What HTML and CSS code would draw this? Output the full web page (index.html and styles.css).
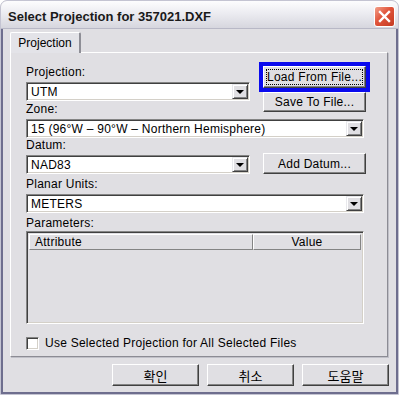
FILE: index.html
```html
<!DOCTYPE html>
<html lang="ko">
<head>
    <meta charset="UTF-8">
    <title>Select Projection</title>
    <link rel="stylesheet" href="styles.css">
</head>
<body>
<div class="window">
    <div class="titlebar">
        <span class="title">Select Projection for 357021.DXF</span>
        <span class="close">
            <svg width="13" height="13" viewBox="0 0 13 13"><path d="M2 2 L11 11 M11 2 L2 11" stroke="#fff" stroke-width="2.4" stroke-linecap="square"/></svg>
        </span>
    </div>
    <div class="frame">
        <div class="tabs"><span class="tab">Projection</span></div>
        <div class="panel">
            <div class="form">
                <label class="lbl lbl-proj">Projection:</label>
                <div class="combo combo-proj"><span class="val">UTM</span><span class="drop"><i></i></span></div>
                <div class="side">
                    <button class="btn focus"><span>Load From File...</span></button>
                    <button class="btn save">Save To File...</button>
                </div>
                <label class="lbl lbl-zone">Zone:</label>
                <div class="combo wide combo-zone"><span class="val">15 (96°W – 90°W – Northern Hemisphere)</span><span class="drop"><i></i></span></div>
                <label class="lbl lbl-datum">Datum:</label>
                <div class="combo combo-datum"><span class="val">NAD83</span><span class="drop"><i></i></span></div>
                <button class="btn add">Add Datum...</button>
                <label class="lbl lbl-planar">Planar Units:</label>
                <div class="combo wide combo-planar"><span class="val">METERS</span><span class="drop"><i></i></span></div>
                <label class="lbl lbl-params">Parameters:</label>
                <div class="list">
                    <div class="head">
                        <span class="col-attr">Attribute</span>
                        <span class="col-val">Value</span>
                    </div>
                </div>
                <div class="check">
                    <span class="box"></span>
                    <span>Use Selected Projection for All Selected Files</span>
                </div>
            </div>
        </div>
        <div class="footer">
            <button class="btn foot">확인</button>
            <button class="btn foot">취소</button>
            <button class="btn foot">도움말</button>
        </div>
    </div>
</div>
</body>
</html>
```

FILE: styles.css
```css
html, body { margin: 0; padding: 0; background: #fff; }
body { font-family: "Liberation Sans", Arial, "Noto Sans CJK KR", sans-serif; font-size: 12px; color: #000; }

.window {
    width: 399px;
    height: 395px;
    box-sizing: border-box;
    border: 1px solid #c4c4d2;
    border-radius: 7px 7px 0 0;
    background: #e0dfe3;
    display: flex;
    flex-direction: column;
    overflow: hidden;
}

.titlebar {
    height: 27px;
    display: flex;
    align-items: center;
    justify-content: space-between;
    padding: 0 3px 0 7px;
    background: linear-gradient(#fdfdfe, #ececf1 45%, #d6d6de);
    border-bottom: 1px solid #b8b8c6;
    border-radius: 6px 6px 0 0;
}
.title { font-weight: bold; font-size: 13px; color: #1a1a1a; padding-top: 3px; }
.close {
    width: 19px;
    height: 19px;
    border: 1px solid #fff;
    border-radius: 3px;
    background: linear-gradient(135deg, #f2a08a, #e0533a 45%, #c33a22);
    display: flex;
    align-items: center;
    justify-content: center;
    margin-top: 3px;
}

.frame {
    flex: 1;
    border: 2px solid #6e6e8e;
    border-top: none;
    padding: 3px 8px 0 7px;
    display: flex;
    flex-direction: column;
}

.tabs { display: flex; height: 20px; }
.tab {
    width: 71px;
    height: 21px;
    box-sizing: border-box;
    border: 1px solid #fff;
    border-right: 2px solid #8e8e96;
    border-bottom: none;
    border-radius: 2px 2px 0 0;
    background: #e3e3e8;
    text-align: center;
    line-height: 20px;
    position: relative;
    z-index: 1;
}

.panel {
    height: 305px;
    box-sizing: border-box;
    border: 1px solid #fff;
    border-right-color: #8c8c94;
    border-bottom-color: #8c8c94;
    box-shadow: 1px 1px 0 #c0c0c8;
    padding: 12px 23px 0 15px;
    letter-spacing: 0.25px;
}

.form {
    display: grid;
    grid-template-columns: 224px 101px;
    column-gap: 13px;
    align-items: start;
}

.lbl { display: block; line-height: 15px; grid-column: 1; }
.lbl-proj { grid-row: 1; }
.lbl-zone { grid-row: 3; margin-top: 1px; }
.lbl-datum { grid-row: 5; margin-top: 0; }
.lbl-planar { grid-row: 7; margin-top: 3px; }
.lbl-params { grid-row: 9; margin-top: 3px; }

.combo {
    height: 19px;
    box-sizing: border-box;
    border: 1px solid;
    border-color: #848484 #fff #fff #848484;
    box-shadow: inset 1px 1px #404040, inset -1px -1px #d4d0c8;
    background: #fff;
    display: flex;
    align-items: center;
    padding: 1px 1px 1px 4px;
    margin-top: 2px;
}
.combo .val { flex: 1; white-space: nowrap; overflow: hidden; }
.combo-proj { grid-row: 2; grid-column: 1; }
.combo-zone { grid-row: 4; }
.combo-datum { grid-row: 6; grid-column: 1; }
.combo-planar { grid-row: 8; }
.wide { grid-column: 1 / 3; }

.drop {
    width: 16px;
    height: 15px;
    box-sizing: border-box;
    background: #e0dfe3;
    border: 1px solid;
    border-color: #e8e8ec #404040 #404040 #e8e8ec;
    box-shadow: inset 1px 1px #fff, inset -1px -1px #848484;
    display: flex;
    align-items: center;
    justify-content: center;
}
.drop i {
    width: 0;
    height: 0;
    border-left: 4px solid transparent;
    border-right: 4px solid transparent;
    border-top: 4px solid #000;
    margin-top: 1px;
}

.btn {
    font: inherit;
    letter-spacing: inherit;
    color: #000;
    background: #e0dfe3;
    border: 1px solid;
    border-color: #fff #404040 #404040 #fff;
    box-shadow: inset -1px -1px #848484;
    padding: 0;
    width: 103px;
    box-sizing: border-box;
}

.side {
    grid-column: 2;
    grid-row: 1 / 4;
    display: flex;
    flex-direction: column;
    padding-top: 1px;
}
.focus { height: 22px; outline: 4px solid #0a0aee; outline-offset: 0; }
.focus span { display: block; margin: 2px; border: 1px dotted #000; line-height: 14px; }
.save { height: 20px; margin-top: 4px; }
.add { grid-column: 2; grid-row: 5 / 7; align-self: end; height: 21px; }

.list {
    grid-column: 1 / 3;
    grid-row: 10;
    margin-top: 0;
    height: 93px;
    box-sizing: border-box;
    border: 1px solid;
    border-color: #848484 #fff #fff #848484;
    box-shadow: inset 1px 1px #404040, inset -1px -1px #d4d0c8;
    padding: 2px;
}
.head { display: flex; height: 16px; }
.head span {
    box-sizing: border-box;
    border: 1px solid;
    border-color: #fff #848484 #848484 #fff;
    line-height: 14px;
}
.col-attr { width: 224px; padding-left: 5px; }
.col-val { flex: 1; text-align: center; }

.check {
    grid-column: 1 / 3;
    grid-row: 11;
    display: flex;
    align-items: center;
    gap: 6px;
    margin-top: 13px;
    line-height: 13px;
}
.check .box {
    width: 13px;
    height: 13px;
    box-sizing: border-box;
    border: 1px solid;
    border-color: #848484 #fff #fff #848484;
    box-shadow: inset 1px 1px #404040, inset -1px -1px #d4d0c8;
    background: #fff;
}

.footer {
    display: flex;
    justify-content: flex-end;
    gap: 8px;
    padding-top: 7px;
    margin-right: -1px;
}
.foot { width: 87px; height: 22px; font-size: 13px; }
```
